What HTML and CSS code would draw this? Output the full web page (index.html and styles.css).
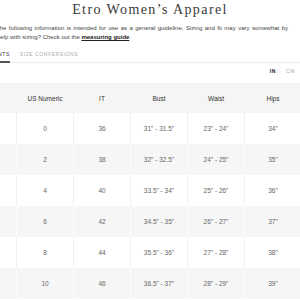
FILE: index.html
```html
<!DOCTYPE html>
<html>
<head>
    <title>Etro Women's Apparel - Size Guide</title>
    <link rel="stylesheet" href="styles.css">
</head>
<body>
    <div class="guide">
        <h1 class="title">Etro Women&rsquo;s Apparel</h1>

        <p class="intro">
            <span class="lead">The following information is intended for use as a general guideline. Sizing and fit may vary somewhat by</span><br>
            Need help with sizing? Check out the <a href="#">measuring guide</a>.
        </p>

        <div class="tabs">
            <span class="tab active">Measurements</span>
            <span class="tab">Size Conversions</span>
        </div>

        <div class="units">
            <span class="unit active">IN</span>
            <span class="unit">CM</span>
        </div>

        <table class="sizes">
            <thead>
                <tr>
                    <th>Size</th>
                    <th>US Numeric</th>
                    <th>IT</th>
                    <th>Bust</th>
                    <th>Waist</th>
                    <th>Hips</th>
                </tr>
            </thead>
            <tbody>
                <tr><td>XXS</td><td>0</td><td>36</td><td>31" - 31.5"</td><td>23" - 24"</td><td>34"</td></tr>
                <tr><td>XS</td><td>2</td><td>38</td><td>32" - 32.5"</td><td>24" - 25"</td><td>35"</td></tr>
                <tr><td>S</td><td>4</td><td>40</td><td>33.5" - 34"</td><td>25" - 26"</td><td>36"</td></tr>
                <tr><td>M</td><td>6</td><td>42</td><td>34.5" - 35"</td><td>26" - 27"</td><td>37"</td></tr>
                <tr><td>L</td><td>8</td><td>44</td><td>35.5" - 36"</td><td>27" - 28"</td><td>38"</td></tr>
                <tr><td>XL</td><td>10</td><td>46</td><td>36.5" - 37"</td><td>28" - 29"</td><td>39"</td></tr>
            </tbody>
        </table>
    </div>
</body>
</html>
```

FILE: styles.css
```css
body {
    margin: 0;
    overflow: hidden;
    background: white;
    font-family: "Liberation Sans", Arial, sans-serif;
    color: #444;
}

.guide {
    width: 380px;
    margin-left: -40px;
}

.title {
    margin: 0;
    padding-top: 1px;
    height: 18px;
    line-height: 18px;
    text-align: center;
    font-family: "Liberation Serif", "Times New Roman", serif;
    font-weight: normal;
    font-size: 14px;
    letter-spacing: 1.4px;
    color: #3a3a3a;
}

.intro {
    margin: 5px 0 0 21px;
    text-indent: 15px;
    font-size: 6px;
    line-height: 9px;
    color: #444;
}

.intro .lead {
    word-spacing: 0.8px;
}

.intro a {
    color: #222;
    font-weight: bold;
    text-decoration: underline;
}

.tabs {
    display: flex;
    gap: 10px;
    margin: 4px 0 0 0;
    padding-left: 1px;
    border-bottom: 1px solid #ececec;
    width: 345px;
}

.tab {
    font-size: 5px;
    letter-spacing: 0.55px;
    text-transform: uppercase;
    color: #aaa;
    padding: 5px 0 4px;
    line-height: 6px;
    border-bottom: 2px solid transparent;
    margin-bottom: -1px;
}

.tab.active {
    color: #333;
    border-bottom-color: #555;
}

.units {
    display: flex;
    justify-content: flex-end;
    gap: 10px;
    width: 335px;
    margin-top: 5px;
    height: 14px;
    line-height: 6px;
}

.unit {
    font-size: 5px;
    letter-spacing: 0.6px;
    color: #aaa;
}

.unit.active {
    color: #222;
    font-weight: bold;
}

.sizes {
    width: 337px;
    table-layout: fixed;
    border-collapse: collapse;
    margin-top: 1px;
}

.sizes th,
.sizes td {
    text-align: center;
    border-left: 1px solid #f0f0f0;
    padding: 0;
    width: 56px;
}

.sizes th:first-child,
.sizes td:first-child {
    border-left: none;
}

.sizes th {
    height: 30px;
    font-size: 6.5px;
    font-weight: normal;
    color: #333;
    background: #f5f5f5;
    border-left-color: #f5f5f5;
}

.sizes td {
    height: 31px;
    font-size: 6.5px;
    color: #666;
}

.sizes tbody tr:nth-child(even) td {
    background: #f6f6f6;
    border-left-color: #fcfcfc;
}
```
